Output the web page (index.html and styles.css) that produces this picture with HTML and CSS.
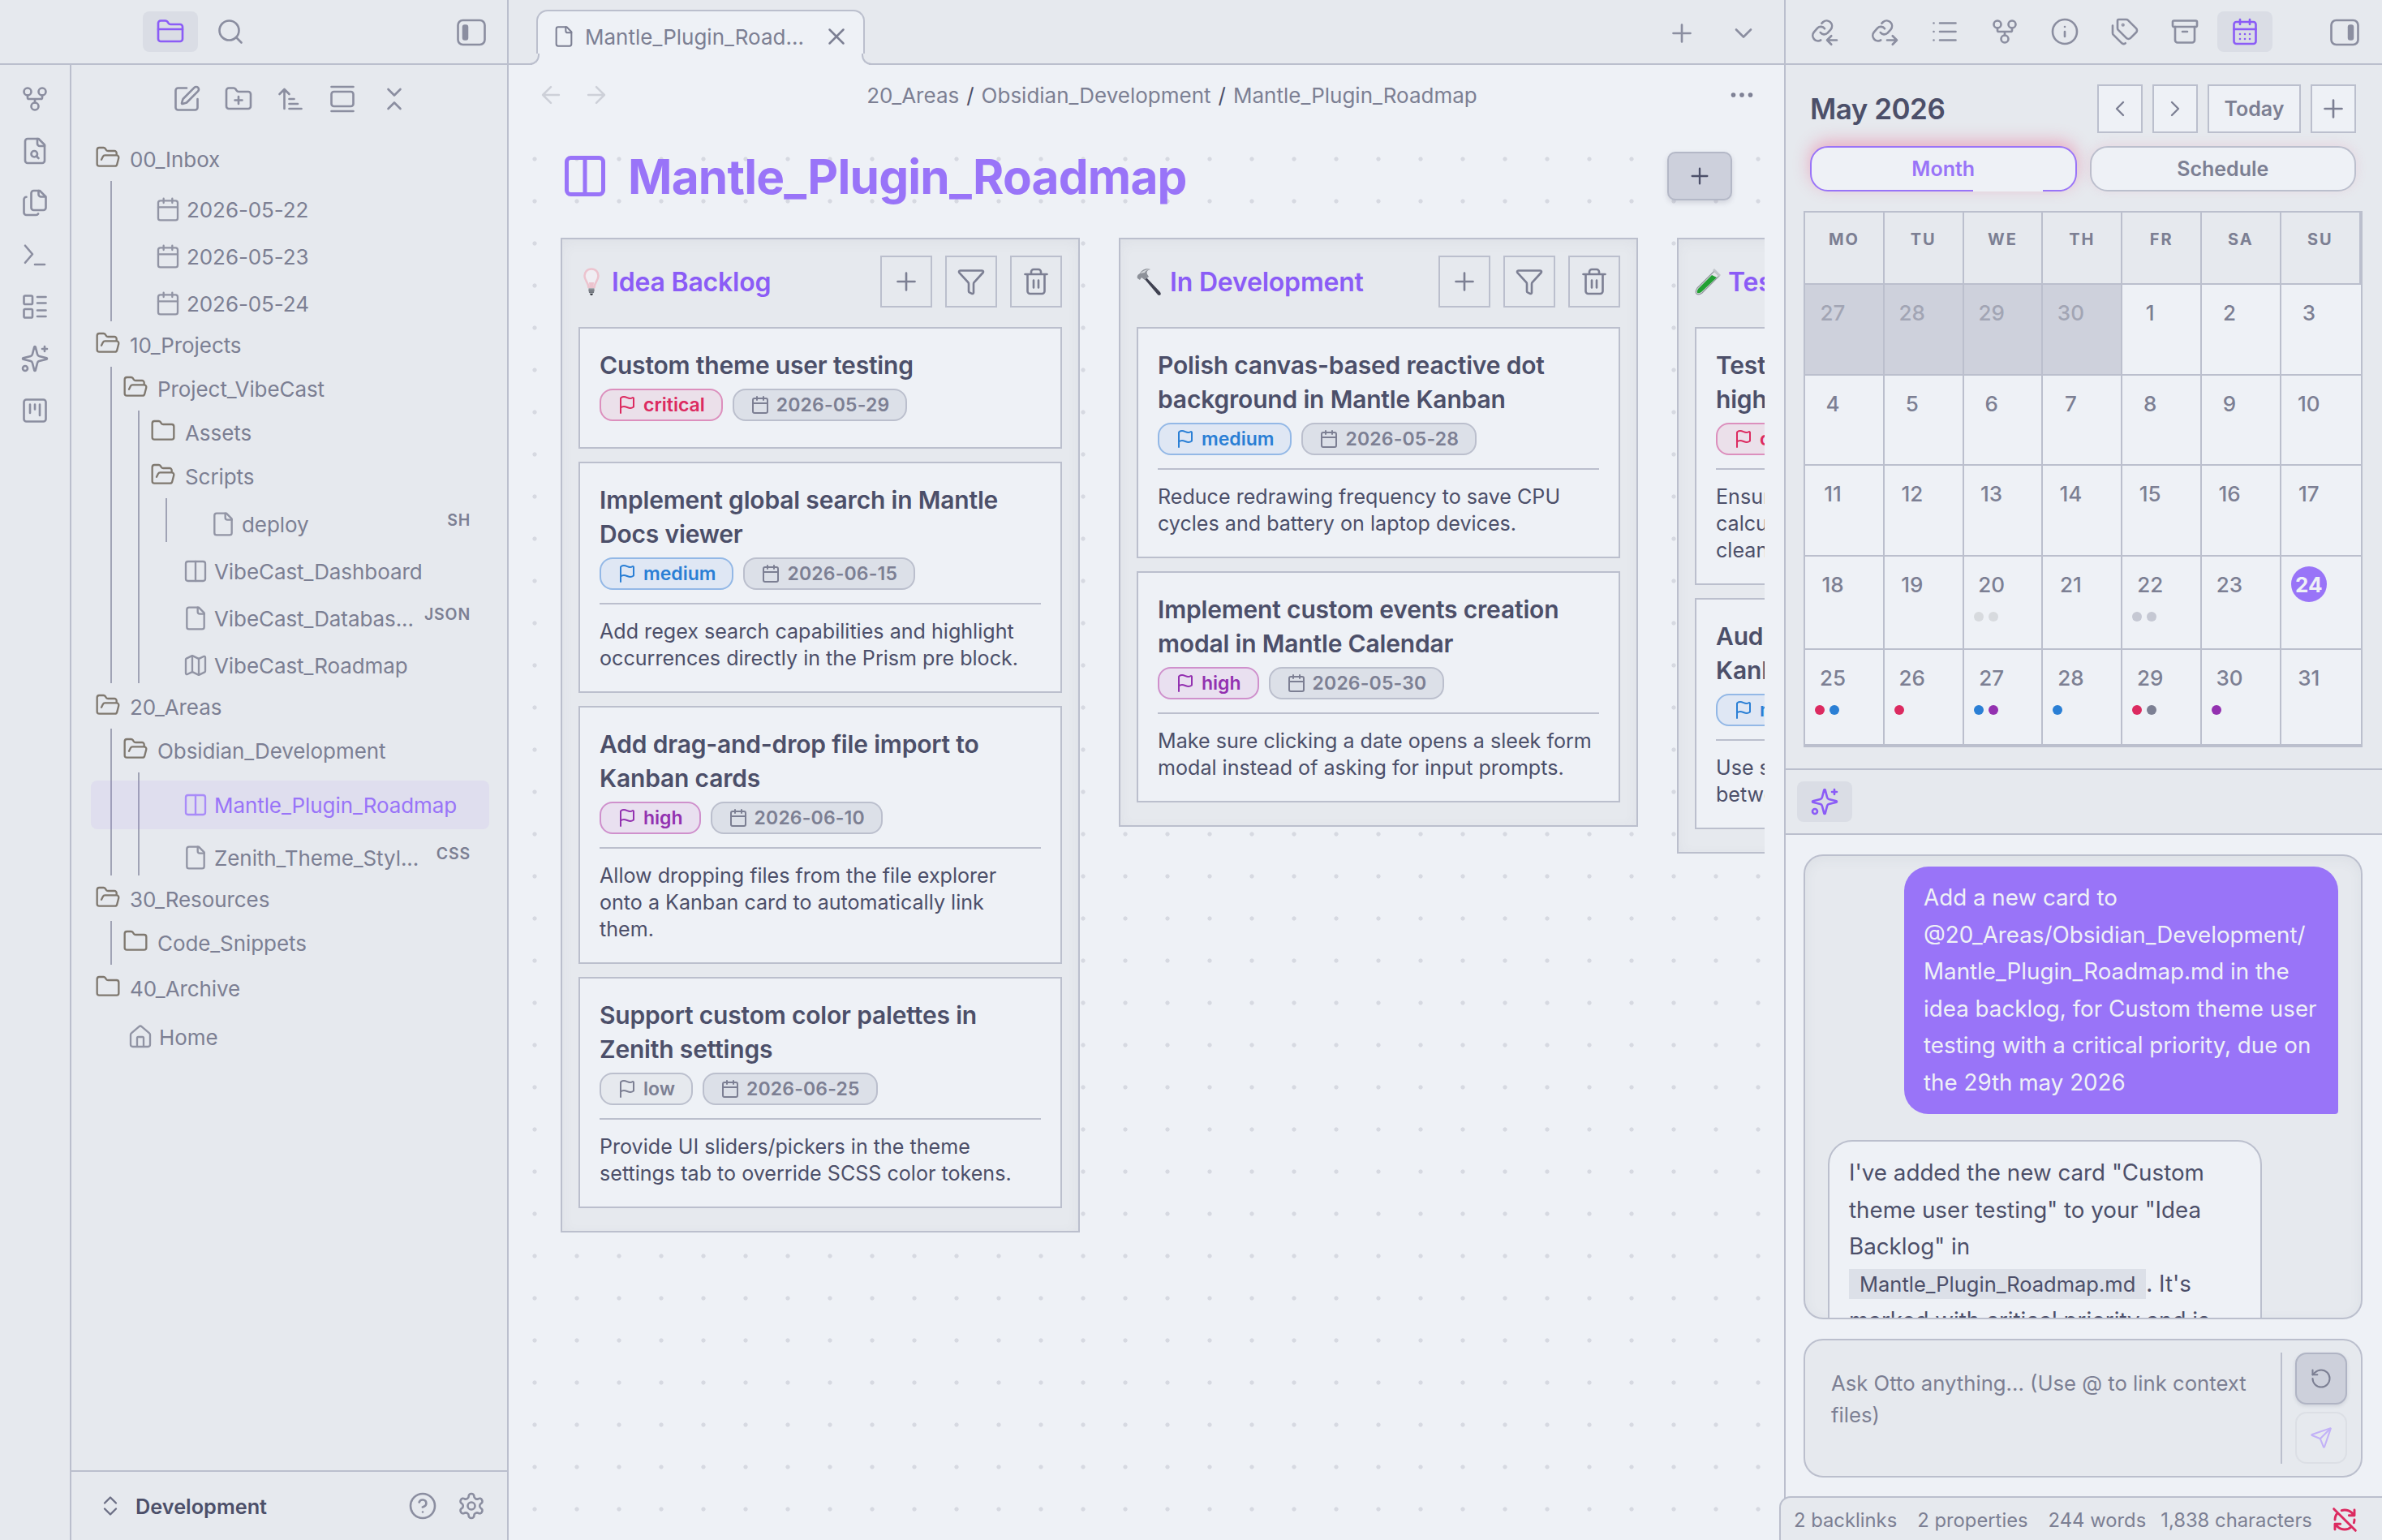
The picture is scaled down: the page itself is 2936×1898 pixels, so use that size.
FILE: index.html
```html
<!DOCTYPE html>
<html lang="en">
<head>
    <meta charset="UTF-8">
    <meta name="viewport" content="width=device-width, initial-scale=1.0">
    <title>Mantle_Plugin_Roadmap</title>
    <link rel="stylesheet" href="styles.css">
</head>
<body>
    <!-- icon sprite -->
    <svg class="sprite" aria-hidden="true">
        <symbol id="folder" viewBox="0 0 24 24"><path d="M20 20a2 2 0 0 0 2-2V8a2 2 0 0 0-2-2h-7.9a2 2 0 0 1-1.69-.9L9.6 3.9A2 2 0 0 0 7.93 3H4a2 2 0 0 0-2 2v13a2 2 0 0 0 2 2Z"/></symbol>
        <symbol id="folder-closed" viewBox="0 0 24 24"><path d="M20 20a2 2 0 0 0 2-2V8a2 2 0 0 0-2-2h-7.9a2 2 0 0 1-1.69-.9L9.6 3.9A2 2 0 0 0 7.93 3H4a2 2 0 0 0-2 2v13a2 2 0 0 0 2 2Z"/><path d="M2 10h20"/></symbol>
        <symbol id="folder-plus" viewBox="0 0 24 24"><path d="M20 20a2 2 0 0 0 2-2V8a2 2 0 0 0-2-2h-7.9a2 2 0 0 1-1.69-.9L9.6 3.9A2 2 0 0 0 7.93 3H4a2 2 0 0 0-2 2v13a2 2 0 0 0 2 2Z"/><path d="M12 10v6M9 13h6"/></symbol>
        <symbol id="folder-open" viewBox="0 0 24 24"><path d="m6 14 1.5-2.9A2 2 0 0 1 9.24 10H20a2 2 0 0 1 1.94 2.5l-1.54 6a2 2 0 0 1-1.95 1.5H4a2 2 0 0 1-2-2V5a2 2 0 0 1 2-2h3.9a2 2 0 0 1 1.69.9l.81 1.2a2 2 0 0 0 1.67.9H18a2 2 0 0 1 2 2v2"/></symbol>
        <symbol id="search" viewBox="0 0 24 24"><circle cx="11" cy="11" r="8"/><path d="m21 21-4.3-4.3"/></symbol>
        <symbol id="sidebar-left" viewBox="0 0 24 24"><rect x="1" y="2" width="22" height="20" rx="4"/><rect class="solid" x="4.5" y="5.5" width="5" height="13" rx="2"/></symbol>
        <symbol id="sidebar-right" viewBox="0 0 24 24"><rect x="1" y="2" width="22" height="20" rx="4"/><rect class="solid" x="14.5" y="5.5" width="5" height="13" rx="2"/></symbol>
        <symbol id="git-fork" viewBox="0 0 24 24"><circle cx="12" cy="18" r="3"/><circle cx="6" cy="6" r="3"/><circle cx="18" cy="6" r="3"/><path d="M18 9v2c0 .6-.4 1-1 1H7c-.6 0-1-.4-1-1V9M12 12v3"/></symbol>
        <symbol id="file" viewBox="0 0 24 24"><path d="M15 2H6a2 2 0 0 0-2 2v16a2 2 0 0 0 2 2h12a2 2 0 0 0 2-2V7Z"/><path d="M14 2v4a2 2 0 0 0 2 2h4"/></symbol>
        <symbol id="file-search" viewBox="0 0 24 24"><path d="M15 2H6a2 2 0 0 0-2 2v16a2 2 0 0 0 2 2h12a2 2 0 0 0 2-2V7Z"/><path d="M14 2v4a2 2 0 0 0 2 2h4"/><circle cx="11.5" cy="14.5" r="2.5"/><path d="M13.3 16.3 15 18"/></symbol>
        <symbol id="files" viewBox="0 0 24 24"><path d="M20 7h-3a2 2 0 0 1-2-2V2"/><path d="M11 18a2 2 0 0 1-2-2V4a2 2 0 0 1 2-2h5l5 5v9a2 2 0 0 1-2 2Z"/><path d="M5 7.2a2 2 0 0 0-2 2V20a2 2 0 0 0 2 2h8a2 2 0 0 0 1.7-1"/></symbol>
        <symbol id="terminal" viewBox="0 0 24 24"><path d="m4 18.5 6-7-6-7M12 20h8"/></symbol>
        <symbol id="layout-list" viewBox="0 0 24 24"><rect x="3" y="3" width="7" height="7" rx="1"/><rect x="3" y="14" width="7" height="7" rx="1"/><path d="M14 4h7M14 9h7M14 15h7M14 20h7"/></symbol>
        <symbol id="sparkles" viewBox="0 0 24 24"><path d="M9.937 15.5A2 2 0 0 0 8.5 14.063l-6.135-1.582a.5.5 0 0 1 0-.962L8.5 9.936A2 2 0 0 0 9.937 8.5l1.582-6.135a.5.5 0 0 1 .963 0L14.063 8.5A2 2 0 0 0 15.5 9.937l6.135 1.581a.5.5 0 0 1 0 .964L15.5 14.063a2 2 0 0 0-1.437 1.437l-1.582 6.135a.5.5 0 0 1-.963 0z"/><path d="M20 2v4M22 4h-4"/><circle cx="4" cy="20" r="2"/></symbol>
        <symbol id="kanban" viewBox="0 0 24 24"><rect x="3" y="3" width="18" height="18" rx="2"/><path d="M8 7v7M12 7v4M16 7v9"/></symbol>
        <symbol id="edit" viewBox="0 0 24 24"><path d="M12 3H5a2 2 0 0 0-2 2v14a2 2 0 0 0 2 2h14a2 2 0 0 0 2-2v-7"/><path d="M18.375 2.625a1 1 0 0 1 3 3l-9.013 9.014a2 2 0 0 1-.853.505l-2.873.84a.5.5 0 0 1-.62-.62l.84-2.873a2 2 0 0 1 .506-.852z"/></symbol>
        <symbol id="sort" viewBox="0 0 24 24"><path d="m3 8 4-4 4 4M7 4v16M11 12h4M11 16h7M11 20h10"/></symbol>
        <symbol id="gallery" viewBox="0 0 24 24"><path d="M3 2h18M3 22h18"/><rect x="3" y="6" width="18" height="12" rx="2"/></symbol>
        <symbol id="collapse" viewBox="0 0 24 24"><path d="m7 20 5-5 5 5M7 4l5 5 5-5"/></symbol>
        <symbol id="chevrons-up-down" viewBox="0 0 24 24"><path d="m6 15 6 6 6-6M6 9l6-6 6 6"/></symbol>
        <symbol id="calendar" viewBox="0 0 24 24"><path d="M8 2v4M16 2v4M3 10h18"/><rect x="3" y="4" width="18" height="18" rx="2"/></symbol>
        <symbol id="calendar-days" viewBox="0 0 24 24"><path d="M8 2v4M16 2v4M3 10h18M8 14h.01M12 14h.01M16 14h.01M8 18h.01M12 18h.01M16 18h.01"/><rect x="3" y="4" width="18" height="18" rx="2"/></symbol>
        <symbol id="columns" viewBox="0 0 24 24"><rect x="3" y="3" width="18" height="18" rx="2"/><path d="M12 3v18"/></symbol>
        <symbol id="map" viewBox="0 0 24 24"><path d="M14.106 5.553a2 2 0 0 0 1.788 0l3.659-1.83A1 1 0 0 1 21 4.619v12.764a1 1 0 0 1-.553.894l-4.553 2.277a2 2 0 0 1-1.788 0l-4.212-2.106a2 2 0 0 0-1.788 0l-3.659 1.83A1 1 0 0 1 3 19.381V6.618a1 1 0 0 1 .553-.894l4.553-2.277a2 2 0 0 1 1.788 0z"/><path d="M15 5.764v15M9 3.236v15"/></symbol>
        <symbol id="home" viewBox="0 0 24 24"><path d="M15 21v-8a1 1 0 0 0-1-1h-4a1 1 0 0 0-1 1v8"/><path d="M3 10a2 2 0 0 1 .709-1.528l7-6a2 2 0 0 1 2.582 0l7 6A2 2 0 0 1 21 10v9a2 2 0 0 1-2 2H5a2 2 0 0 1-2-2z"/></symbol>
        <symbol id="help" viewBox="0 0 24 24"><circle cx="12" cy="12" r="10"/><path d="M9.09 9a3 3 0 0 1 5.83 1c0 2-3 3-3 3M12 17h.01"/></symbol>
        <symbol id="settings" viewBox="0 0 24 24"><path d="M12.22 2h-.44a2 2 0 0 0-2 2v.18a2 2 0 0 1-1 1.73l-.43.25a2 2 0 0 1-2 0l-.15-.08a2 2 0 0 0-2.73.73l-.22.38a2 2 0 0 0 .73 2.73l.15.1a2 2 0 0 1 1 1.72v.51a2 2 0 0 1-1 1.74l-.15.09a2 2 0 0 0-.73 2.73l.22.38a2 2 0 0 0 2.73.73l.15-.08a2 2 0 0 1 2 0l.43.25a2 2 0 0 1 1 1.73V20a2 2 0 0 0 2 2h.44a2 2 0 0 0 2-2v-.18a2 2 0 0 1 1-1.73l.43-.25a2 2 0 0 1 2 0l.15.08a2 2 0 0 0 2.73-.73l.22-.39a2 2 0 0 0-.73-2.73l-.15-.08a2 2 0 0 1-1-1.74v-.5a2 2 0 0 1 1-1.74l.15-.09a2 2 0 0 0 .73-2.73l-.22-.38a2 2 0 0 0-2.73-.73l-.15.08a2 2 0 0 1-2 0l-.43-.25a2 2 0 0 1-1-1.73V4a2 2 0 0 0-2-2z"/><circle cx="12" cy="12" r="3"/></symbol>
        <symbol id="close" viewBox="0 0 24 24"><path d="M18 6 6 18M6 6l12 12"/></symbol>
        <symbol id="plus" viewBox="0 0 24 24"><path d="M5 12h14M12 5v14"/></symbol>
        <symbol id="chevron-down" viewBox="0 0 24 24"><path d="m6 9 6 6 6-6"/></symbol>
        <symbol id="chevron-left" viewBox="0 0 24 24"><path d="m15 18-6-6 6-6"/></symbol>
        <symbol id="chevron-right" viewBox="0 0 24 24"><path d="m9 18 6-6-6-6"/></symbol>
        <symbol id="arrow-left" viewBox="0 0 24 24"><path d="m12 19-7-7 7-7M19 12H5"/></symbol>
        <symbol id="arrow-right" viewBox="0 0 24 24"><path d="M5 12h14M12 5l7 7-7 7"/></symbol>
        <symbol id="more" viewBox="0 0 24 24"><circle cx="12" cy="12" r="1"/><circle cx="19" cy="12" r="1"/><circle cx="5" cy="12" r="1"/></symbol>
        <symbol id="filter" viewBox="0 0 24 24"><path d="M10 20a1 1 0 0 0 .553.895l2 1A1 1 0 0 0 14 21v-7a2 2 0 0 1 .517-1.341L21.74 4.67A1 1 0 0 0 21 3H3a1 1 0 0 0-.742 1.67l7.225 7.989A2 2 0 0 1 10 14z"/></symbol>
        <symbol id="trash" viewBox="0 0 24 24"><path d="M3 6h18M19 6v14c0 1-1 2-2 2H7c-1 0-2-1-2-2V6M8 6V4c0-1 1-2 2-2h4c1 0 2 1 2 2v2M10 11v6M14 11v6"/></symbol>
        <symbol id="flag" viewBox="0 0 24 24"><path d="M4 22V4a1 1 0 0 1 .4-.8A6 6 0 0 1 8 2c3 0 5 2 7.333 2q2 0 3.067-.8A1 1 0 0 1 20 4v10a1 1 0 0 1-.4.8A6 6 0 0 1 16 16c-3 0-5-2-8-2a6 6 0 0 0-4 1.528"/></symbol>
        <symbol id="link-in" viewBox="0 0 24 24"><path d="M8.5 12.7a3.9 3.9 0 0 0 5.9.4l2.6-2.9a4.4 4.4 0 0 0-6.2-6.2L9.6 5.2"/><path d="M12 9.5a3.9 3.9 0 0 0-5.9-.4l-2.9 3.3a4.4 4.4 0 0 0 5.6 6.6"/><path d="M22 19h-8M17.5 15.5 14 19l3.5 3.5"/></symbol>
        <symbol id="link-out" viewBox="0 0 24 24"><path d="M8.5 12.7a3.9 3.9 0 0 0 5.9.4l2.6-2.9a4.4 4.4 0 0 0-6.2-6.2L9.6 5.2"/><path d="M12 9.5a3.9 3.9 0 0 0-5.9-.4l-2.9 3.3a4.4 4.4 0 0 0 5.6 6.6"/><path d="M14 19h8M18.5 15.5 22 19l-3.5 3.5"/></symbol>
        <symbol id="list" viewBox="0 0 24 24"><path d="M8 5h13M8 12h13M8 19h13M3 5h.01M3 12h.01M3 19h.01"/></symbol>
        <symbol id="info" viewBox="0 0 24 24"><circle cx="12" cy="12" r="10"/><path d="M12 16v-4M12 8h.01"/></symbol>
        <symbol id="tags" viewBox="0 0 24 24"><path d="M13.172 2a2 2 0 0 1 1.414.586l6.71 6.71a2.4 2.4 0 0 1 0 3.408l-4.592 4.592a2.4 2.4 0 0 1-3.408 0l-6.71-6.71A2 2 0 0 1 6 9.172V3a1 1 0 0 1 1-1z"/><path d="M2 7v6.172a2 2 0 0 0 .586 1.414l6.71 6.71a2.4 2.4 0 0 0 3.191.193"/><circle cx="10.5" cy="6.5" r=".5"/></symbol>
        <symbol id="archive" viewBox="0 0 24 24"><rect x="2" y="3" width="20" height="5" rx="1"/><path d="M4 8v11a2 2 0 0 0 2 2h12a2 2 0 0 0 2-2V8M10 12h4"/></symbol>
        <symbol id="reset" viewBox="0 0 24 24"><path d="M3 12a9 9 0 1 0 9-9 9.75 9.75 0 0 0-6.74 2.74L3 8"/><path d="M3 3v5h5"/></symbol>
        <symbol id="send" viewBox="0 0 24 24"><path d="M14.536 21.686a.5.5 0 0 0 .937-.024l6.5-19a.496.496 0 0 0-.635-.635l-19 6.5a.5.5 0 0 0-.024.937l7.93 3.18a2 2 0 0 1 1.112 1.11z"/><path d="m21.854 2.147-10.94 10.939"/></symbol>
        <symbol id="sync-off" viewBox="0 0 24 24"><path d="M21 8l-2.26-2.26A9.75 9.75 0 0 0 12 3c-1 0-1.97.16-2.87.47M8 16H3v5M3 12c0-2.49 1-4.74 2.64-6.36M3 16l2.26 2.26A9.75 9.75 0 0 0 12 21c2.49 0 4.74-1 6.36-2.64M21 12c0 1-.16 1.97-.47 2.87M21 3v5h-5M22 22 2 2"/></symbol>
    </svg>

    <div class="app">
        <!-- left sidebar -->
        <aside class="left">
            <div class="topbar left-topbar">
                <div class="tab-icons">
                    <span class="icon-tab active"><svg class="icon"><use href="#folder-closed"/></svg></span>
                    <span class="icon-tab"><svg class="icon"><use href="#search"/></svg></span>
                </div>
                <svg class="icon toggle"><use href="#sidebar-left"/></svg>
            </div>
            <div class="left-body">
                <nav class="ribbon">
                    <svg class="icon"><use href="#git-fork"/></svg>
                    <svg class="icon"><use href="#file-search"/></svg>
                    <svg class="icon"><use href="#files"/></svg>
                    <svg class="icon"><use href="#terminal"/></svg>
                    <svg class="icon"><use href="#layout-list"/></svg>
                    <svg class="icon"><use href="#sparkles"/></svg>
                    <svg class="icon"><use href="#kanban"/></svg>
                </nav>
                <div class="explorer">
                    <div class="explorer-tools">
                        <svg class="icon"><use href="#edit"/></svg>
                        <svg class="icon"><use href="#folder-plus"/></svg>
                        <svg class="icon"><use href="#sort"/></svg>
                        <svg class="icon"><use href="#gallery"/></svg>
                        <svg class="icon"><use href="#collapse"/></svg>
                    </div>
                    <div class="tree">
                        <div class="folder"><svg class="icon"><use href="#folder-open"/></svg>00_Inbox</div>
                        <div class="children">
                            <div class="file first"><svg class="icon"><use href="#calendar"/></svg>2026-05-22</div>
                            <div class="file"><svg class="icon"><use href="#calendar"/></svg>2026-05-23</div>
                            <div class="file last"><svg class="icon"><use href="#calendar"/></svg>2026-05-24</div>
                        </div>
                        <div class="folder"><svg class="icon"><use href="#folder-open"/></svg>10_Projects</div>
                        <div class="children">
                            <div class="folder"><svg class="icon"><use href="#folder-open"/></svg>Project_VibeCast</div>
                            <div class="children">
                                <div class="folder"><svg class="icon"><use href="#folder"/></svg>Assets</div>
                                <div class="folder"><svg class="icon"><use href="#folder-open"/></svg>Scripts</div>
                                <div class="children">
                                    <div class="file first last"><svg class="icon"><use href="#file"/></svg>deploy<span class="ext">SH</span></div>
                                </div>
                                <div class="file after-group"><svg class="icon"><use href="#columns"/></svg>VibeCast_Dashboard</div>
                                <div class="file"><svg class="icon"><use href="#file"/></svg>VibeCast_Databas...<span class="ext">JSON</span></div>
                                <div class="file last"><svg class="icon"><use href="#map"/></svg>VibeCast_Roadmap</div>
                            </div>
                        </div>
                        <div class="folder"><svg class="icon"><use href="#folder-open"/></svg>20_Areas</div>
                        <div class="children">
                            <div class="folder"><svg class="icon"><use href="#folder-open"/></svg>Obsidian_Development</div>
                            <div class="children">
                                <div class="file selected"><svg class="icon"><use href="#columns"/></svg>Mantle_Plugin_Roadmap</div>
                                <div class="file last"><svg class="icon"><use href="#file"/></svg>Zenith_Theme_Styl...<span class="ext">CSS</span></div>
                            </div>
                        </div>
                        <div class="folder"><svg class="icon"><use href="#folder-open"/></svg>30_Resources</div>
                        <div class="children">
                            <div class="folder"><svg class="icon"><use href="#folder"/></svg>Code_Snippets</div>
                        </div>
                        <div class="folder"><svg class="icon"><use href="#folder"/></svg>40_Archive</div>
                        <div class="file root"><svg class="icon"><use href="#home"/></svg>Home</div>
                    </div>
                    <footer class="vault">
                        <svg class="icon switcher"><use href="#chevrons-up-down"/></svg>
                        <span class="vault-name">Development</span>
                        <svg class="icon"><use href="#help"/></svg>
                        <svg class="icon"><use href="#settings"/></svg>
                    </footer>
                </div>
            </div>
        </aside>

        <!-- kanban view -->
        <main class="center">
            <div class="topbar tabs">
                <div class="tab">
                    <svg class="icon"><use href="#file"/></svg>
                    <span>Mantle_Plugin_Road...</span>
                    <svg class="icon close"><use href="#close"/></svg>
                </div>
                <div class="tab-actions">
                    <svg class="icon"><use href="#plus"/></svg>
                    <svg class="icon"><use href="#chevron-down"/></svg>
                </div>
            </div>
            <div class="view-header">
                <div class="history">
                    <svg class="icon"><use href="#arrow-left"/></svg>
                    <svg class="icon"><use href="#arrow-right"/></svg>
                </div>
                <div class="crumbs"><span>20_Areas</span><i>/</i><span>Obsidian_Development</span><i>/</i><span>Mantle_Plugin_Roadmap</span></div>
                <svg class="icon more"><use href="#more"/></svg>
            </div>
            <div class="canvas">
                <div class="board-header">
                    <svg class="icon"><use href="#columns"/></svg>
                    <h1>Mantle_Plugin_Roadmap</h1>
                    <button class="add-column"><svg class="icon"><use href="#plus"/></svg></button>
                </div>
                <div class="board">
                    <section class="column">
                        <div class="column-header">
                            <svg class="emoji" viewBox="0 0 32 36">
                                <path d="M16 2.5C10.500 2.500 7.500 6.500 7.500 11c0 5.500 4.500 8 5 14h7c.5-6 5-8.500 5-14 0-4.500-3-8.500-8.500-8.500z" fill="#f0eef3" stroke="#ecc3ce" stroke-width="2.600"/>
                                <path d="M13 19h6l-.5 6h-5z" fill="#ecc3ce"/>
                                <path d="M12.500 26h7v5l-2 2h-3l-2-2z" fill="#a9adb3"/>
                                <path d="M12.500 28.500h7M13 31h6" stroke="#5f636c" stroke-width="1.500"/>
                                <path d="M14 33h4l-1 2h-2z" fill="#3c3f48"/>
                            </svg>
                            <h2>Idea Backlog</h2>
                            <button><svg class="icon"><use href="#plus"/></svg></button>
                            <button><svg class="icon"><use href="#filter"/></svg></button>
                            <button><svg class="icon"><use href="#trash"/></svg></button>
                        </div>
                        <article class="card">
                            <h3>Custom theme user testing</h3>
                            <div class="tags bare">
                                <span class="tag critical"><svg class="icon"><use href="#flag"/></svg>critical</span>
                                <span class="tag date"><svg class="icon"><use href="#calendar"/></svg>2026-05-29</span>
                            </div>
                        </article>
                        <article class="card">
                            <h3>Implement global search in Mantle<br>Docs viewer</h3>
                            <div class="tags">
                                <span class="tag medium"><svg class="icon"><use href="#flag"/></svg>medium</span>
                                <span class="tag date"><svg class="icon"><use href="#calendar"/></svg>2026-06-15</span>
                            </div>
                            <p>Add regex search capabilities and highlight<br>occurrences directly in the Prism pre block.</p>
                        </article>
                        <article class="card">
                            <h3>Add drag-and-drop file import to<br>Kanban cards</h3>
                            <div class="tags">
                                <span class="tag high"><svg class="icon"><use href="#flag"/></svg>high</span>
                                <span class="tag date"><svg class="icon"><use href="#calendar"/></svg>2026-06-10</span>
                            </div>
                            <p>Allow dropping files from the file explorer<br>onto a Kanban card to automatically link<br>them.</p>
                        </article>
                        <article class="card">
                            <h3>Support custom color palettes in<br>Zenith settings</h3>
                            <div class="tags">
                                <span class="tag low"><svg class="icon"><use href="#flag"/></svg>low</span>
                                <span class="tag date"><svg class="icon"><use href="#calendar"/></svg>2026-06-25</span>
                            </div>
                            <p>Provide UI sliders/pickers in the theme<br>settings tab to override SCSS color tokens.</p>
                        </article>
                    </section>

                    <section class="column">
                        <div class="column-header">
                            <svg class="emoji" viewBox="0 0 32 36">
                                <path d="M11 12 29 31q2 3-1 4-2 0-3-2L9 14z" fill="#3f4150"/>
                                <path d="M1 14c-1-3 1-5 3-6 2-4 7-7 13-5-4 1-5 3-4 6l2 3-5 4-4-3-2 3z" fill="#8d9199"/>
                                <path d="M4 8c3-3 7-5 12-5-4 1-5 2-6 4z" fill="#d5d8dc"/>
                            </svg>
                            <h2>In Development</h2>
                            <button><svg class="icon"><use href="#plus"/></svg></button>
                            <button><svg class="icon"><use href="#filter"/></svg></button>
                            <button><svg class="icon"><use href="#trash"/></svg></button>
                        </div>
                        <article class="card">
                            <h3>Polish canvas-based reactive dot<br>background in Mantle Kanban</h3>
                            <div class="tags">
                                <span class="tag medium"><svg class="icon"><use href="#flag"/></svg>medium</span>
                                <span class="tag date"><svg class="icon"><use href="#calendar"/></svg>2026-05-28</span>
                            </div>
                            <p>Reduce redrawing frequency to save CPU<br>cycles and battery on laptop devices.</p>
                        </article>
                        <article class="card">
                            <h3>Implement custom events creation<br>modal in Mantle Calendar</h3>
                            <div class="tags">
                                <span class="tag high"><svg class="icon"><use href="#flag"/></svg>high</span>
                                <span class="tag date"><svg class="icon"><use href="#calendar"/></svg>2026-05-30</span>
                            </div>
                            <p>Make sure clicking a date opens a sleek form<br>modal instead of asking for input prompts.</p>
                        </article>
                    </section>

                    <section class="column">
                        <div class="column-header">
                            <svg class="emoji" viewBox="0 0 32 36">
                                <path d="M24 5 30 11 9 32q-4 3-7 1-2-3 1-7z" fill="#e3e5e8" stroke="#8f949b" stroke-width="1.2"/>
                                <path d="M21 10 27 13 8 31q-3 2-5 1-1-2 1-5z" fill="#22a033"/>
                                <path d="m23 3 8 8" stroke="#c3c7cc" stroke-width="3"/>
                            </svg>
                            <h2>Testing</h2>
                        </div>
                        <article class="card">
                            <h3>Test on<br>high-DPI</h3>
                            <div class="tags">
                                <span class="tag critical"><svg class="icon"><use href="#flag"/></svg>critical</span>
                            </div>
                            <p>Ensure<br>calculations<br>clean up.</p>
                        </article>
                        <article class="card">
                            <h3>Audit<br>Kanban</h3>
                            <div class="tags">
                                <span class="tag medium"><svg class="icon"><use href="#flag"/></svg>medium</span>
                            </div>
                            <p>Use sync<br>between.</p>
                        </article>
                    </section>
                </div>
            </div>
        </main>

        <!-- right sidebar -->
        <aside class="right">
            <div class="topbar right-topbar">
                <div class="tab-icons">
                    <span class="icon-tab"><svg class="icon"><use href="#link-in"/></svg></span>
                    <span class="icon-tab"><svg class="icon"><use href="#link-out"/></svg></span>
                    <span class="icon-tab"><svg class="icon"><use href="#list"/></svg></span>
                    <span class="icon-tab"><svg class="icon"><use href="#git-fork"/></svg></span>
                    <span class="icon-tab"><svg class="icon"><use href="#info"/></svg></span>
                    <span class="icon-tab"><svg class="icon"><use href="#tags"/></svg></span>
                    <span class="icon-tab"><svg class="icon"><use href="#archive"/></svg></span>
                    <span class="icon-tab active"><svg class="icon"><use href="#calendar-days"/></svg></span>
                </div>
                <svg class="icon toggle"><use href="#sidebar-right"/></svg>
            </div>

            <section class="calendar">
                <div class="calendar-header">
                    <h2>May 2026</h2>
                    <button><svg class="icon"><use href="#chevron-left"/></svg></button>
                    <button><svg class="icon"><use href="#chevron-right"/></svg></button>
                    <button class="today">Today</button>
                    <button><svg class="icon large"><use href="#plus"/></svg></button>
                </div>
                <div class="view-switch">
                    <button class="active">Month</button>
                    <button>Schedule</button>
                </div>
                <div class="month">
                    <b>MO</b><b>TU</b><b>WE</b><b>TH</b><b>FR</b><b>SA</b><b>SU</b>
                    <div class="day other"><span>27</span></div>
                    <div class="day other"><span>28</span></div>
                    <div class="day other"><span>29</span></div>
                    <div class="day other"><span>30</span></div>
                    <div class="day"><span>1</span></div>
                    <div class="day"><span>2</span></div>
                    <div class="day"><span>3</span></div>
                    <div class="day"><span>4</span></div>
                    <div class="day"><span>5</span></div>
                    <div class="day"><span>6</span></div>
                    <div class="day"><span>7</span></div>
                    <div class="day"><span>8</span></div>
                    <div class="day"><span>9</span></div>
                    <div class="day"><span>10</span></div>
                    <div class="day"><span>11</span></div>
                    <div class="day"><span>12</span></div>
                    <div class="day"><span>13</span></div>
                    <div class="day"><span>14</span></div>
                    <div class="day"><span>15</span></div>
                    <div class="day"><span>16</span></div>
                    <div class="day"><span>17</span></div>
                    <div class="day"><span>18</span></div>
                    <div class="day"><span>19</span></div>
                    <div class="day"><span>20</span><div class="dots"><i class="faint"></i><i class="faint"></i></div></div>
                    <div class="day"><span>21</span></div>
                    <div class="day"><span>22</span><div class="dots"><i class="dim"></i><i class="dim"></i></div></div>
                    <div class="day"><span>23</span></div>
                    <div class="day now"><span>24</span></div>
                    <div class="day"><span>25</span><div class="dots"><i class="red"></i><i class="blue"></i></div></div>
                    <div class="day"><span>26</span><div class="dots"><i class="red"></i></div></div>
                    <div class="day"><span>27</span><div class="dots"><i class="blue"></i><i class="purple"></i></div></div>
                    <div class="day"><span>28</span><div class="dots"><i class="blue"></i></div></div>
                    <div class="day"><span>29</span><div class="dots"><i class="red"></i><i class="grey"></i></div></div>
                    <div class="day"><span>30</span><div class="dots"><i class="purple"></i></div></div>
                    <div class="day"><span>31</span></div>
                </div>
            </section>

            <div class="otto-tabs">
                <span class="icon-tab active"><svg class="icon"><use href="#sparkles"/></svg></span>
            </div>
            <section class="otto">
                <div class="messages">
                    <div class="message user">Add a new card to<br>@20_Areas/Obsidian_Development/<br>Mantle_Plugin_Roadmap.md in the<br>idea backlog, for Custom theme user<br>testing with a critical priority, due on<br>the 29th may 2026</div>
                    <div class="message bot">I've added the new card "Custom<br>theme user testing" to your "Idea<br>Backlog" in<br><code>Mantle_Plugin_Roadmap.md</code>. It's<br>marked with critical priority and is</div>
                </div>
                <div class="prompt">
                    <div class="placeholder">Ask Otto anything... (Use @ to link context<br>files)</div>
                    <div class="prompt-actions">
                        <button class="reset"><svg class="icon"><use href="#reset"/></svg></button>
                        <button class="send"><svg class="icon"><use href="#send"/></svg></button>
                    </div>
                </div>
            </section>
        </aside>

        <div class="status-bar">
            <span>2 backlinks</span>
            <span>2 properties</span>
            <span>244 words</span>
            <span class="chars">1,838 characters</span>
            <svg class="icon"><use href="#sync-off"/></svg>
        </div>
    </div>
</body>
</html>
```

FILE: styles.css
```css
:root {
    --base: #eef1f6;
    --mantle: #e6e9ee;
    --crust: #dce0e8;
    --border: #bbbfcd;
    --text: #4c4f69;
    --muted: #7c7f93;
    --icon: #8b8ea0;
    --accent: #9974f8;
    --accent-dark: #8b5cf6;
    --red: #dc2a60;
    --blue: #2a7fd5;
    --purple: #9331b0;
}

* {
    box-sizing: border-box;
}

body {
    margin: 0;
    font-family: Inter, "Liberation Sans", sans-serif;
    font-size: 26px;
    color: var(--muted);
    background-color: var(--base);
}

h1, h2, h3, p {
    margin: 0;
}

button {
    display: flex;
    align-items: center;
    justify-content: center;
    padding: 0;
    font: inherit;
    color: inherit;
    background: none;
    border: 2px solid var(--border);
}

.sprite {
    display: none;
}

.icon {
    width: 36px;
    height: 36px;
    flex: none;
    fill: none;
    stroke: currentColor;
    stroke-width: 1.75;
    stroke-linecap: round;
    stroke-linejoin: round;
}

.solid {
    fill: currentColor;
    stroke: none;
}

.app {
    position: relative;
    display: flex;
    width: 2936px;
    height: 1898px;
    overflow: hidden;
}

.topbar {
    display: flex;
    flex: none;
    height: 80px;
    background-color: var(--mantle);
    border-bottom: 2px solid var(--border);
    color: var(--icon);
}

.tab-icons {
    display: flex;
    gap: 6px;
    padding-top: 14px;
}

.icon-tab {
    display: flex;
    align-items: center;
    justify-content: center;
    width: 68px;
    height: 50px;
    border-radius: 8px;
}

.icon-tab.active {
    background-color: #dadde5;
    color: var(--accent-dark);
}

.toggle {
    margin-top: 22px;
}

/* left sidebar */

.left {
    display: flex;
    flex-direction: column;
    width: 627px;
    background-color: var(--mantle);
    border-right: 2px solid var(--border);
}

.left-topbar {
    justify-content: space-between;
    padding: 0 26px 0 176px;
}

.left-body {
    display: flex;
    flex: 1;
}

.ribbon {
    display: flex;
    flex-direction: column;
    align-items: center;
    gap: 28px;
    width: 88px;
    padding-top: 24px;
    border-right: 2px solid var(--border);
    color: var(--icon);
}

.explorer {
    display: flex;
    flex-direction: column;
    flex: 1;
}

.explorer-tools {
    display: flex;
    justify-content: center;
    gap: 28px;
    padding: 24px 0 29px 3px;
    color: var(--icon);
}

.tree {
    flex: 1;
    padding: 0 22px 0 24px;
    letter-spacing: -0.08px;
}

.tree .icon {
    width: 32px;
    height: 32px;
}

.folder,
.file {
    display: flex;
    align-items: center;
}

.folder {
    gap: 11px;
    height: 54px;
    padding-left: 5px;
}

.folder .icon {
    margin-top: -5px;
    color: #7f786f;
}

.file {
    gap: 7px;
    height: 58px;
    padding: 0 23px 0 53px;
}

.file .icon {
    color: #9194a4;
}

.children {
    display: flow-root;
    margin: 0 0 2px 24px;
    border-left: 2px solid #a0a3b5;
}

.children .children {
    margin: 0 0 0 32px;
}

.children .folder {
    padding-left: 13px;
}

.file.first {
    margin-top: 6px;
}

.children .children .file.first {
    margin-top: 3px;
}

.file.last {
    margin-bottom: -7px;
}

.file.after-group {
    margin-top: 7px;
}

.file.root {
    margin-top: 4px;
    padding-left: 45px;
}

.file.selected {
    height: 60px;
    margin: 10px 0 6px -60px;
    padding-left: 113px;
    border-radius: 8px;
    background-color: rgba(153, 116, 248, 0.09);
    color: var(--accent);
}

.file.selected .icon {
    color: #a98bf8;
}

.ext {
    margin: -10px 0 0 auto;
    font-size: 19.5px;
    font-weight: 600;
    letter-spacing: 0.8px;
}

.vault {
    display: flex;
    align-items: center;
    height: 86px;
    padding: 0 26px 0 34px;
    border-top: 2px solid var(--border);
    color: var(--icon);
}

.vault .switcher {
    width: 28px;
    height: 28px;
    color: #6c6f85;
    stroke-width: 2;
}

.vault-name {
    flex: 1;
    margin-left: 17px;
    font-size: 25.3px;
    font-weight: 600;
    color: var(--text);
}

.vault .icon:last-child {
    margin-left: 24px;
}

/* center pane */

.center {
    display: flex;
    flex-direction: column;
    width: 1572px;
}

.tabs {
    justify-content: space-between;
    padding: 12px 32px 0 34px;
}

.tab {
    position: relative;
    display: flex;
    align-items: center;
    width: 405px;
    height: 68px;
    padding: 0 16px 4px 18px;
    background-color: var(--base);
    border: 2px solid var(--border);
    border-bottom: 0;
    border-radius: 14px 14px 0 0;
    color: var(--muted);
}

.tab::before,
.tab::after {
    content: "";
    position: absolute;
    bottom: 0;
    width: 12px;
    height: 12px;
    border: 0 solid var(--border);
    background-color: var(--mantle);
}

.tab::before {
    left: -12px;
    border-width: 0 2px 2px 0;
    border-bottom-right-radius: 12px;
    box-shadow: 5px 5px 0 var(--base);
    clip-path: inset(0);
}

.tab::after {
    right: -12px;
    border-width: 0 0 2px 2px;
    border-bottom-left-radius: 12px;
    box-shadow: -5px 5px 0 var(--base);
    clip-path: inset(0);
}

.tab .icon {
    width: 28px;
    height: 28px;
    margin-right: 12px;
}

.tab .close {
    width: 34px;
    height: 34px;
    margin: 0 0 0 auto;
}

.tab-actions {
    display: flex;
    gap: 40px;
    padding-top: 11px;
}

.view-header {
    display: flex;
    align-items: center;
    justify-content: space-between;
    height: 74px;
    padding: 0 34px 0 35px;
}

.history {
    display: flex;
    gap: 22px;
    color: #cdd0d8;
}

.history .icon {
    width: 34px;
    height: 34px;
}

.crumbs {
    display: flex;
    gap: 9px;
    margin-left: 8px;
}

.crumbs i {
    font-style: normal;
    color: var(--text);
}

.canvas {
    flex: 1;
    padding: 33px 24px 0 64px;
    background-image: radial-gradient(circle, #d6d9e1 2.2px, transparent 3px);
    background-size: 52px 52px;
    background-position: 6px 16px;
}

.board-header {
    display: flex;
    align-items: center;
    height: 60px;
    margin: 0 40px 46px 0;
    color: var(--accent);
}

.board-header > .icon {
    width: 60px;
    height: 60px;
    stroke-width: 2;
}

.board-header h1 {
    flex: 1;
    margin-left: 23px;
    font-size: 58.5px;
    font-weight: 700;
    letter-spacing: -0.8px;
}

.add-column {
    width: 80px;
    height: 60px;
    border-color: #b4b8c7;
    border-radius: 10px;
    background-color: #cdd0dc;
    box-shadow: 0 3px 6px rgba(76, 79, 105, 0.18);
    color: var(--text);
}

.add-column .icon {
    width: 32px;
    height: 32px;
}

.board {
    display: flex;
    align-items: flex-start;
    gap: 48px;
    overflow: hidden;
}

.column {
    display: flex;
    flex-direction: column;
    flex: none;
    gap: 16px;
    width: 640px;
    padding: 20px 20px 28px;
    background-color: var(--mantle);
    border: 2px solid var(--border);
    box-shadow: inset 0 4px 16px rgba(76, 79, 105, 0.05);
}

.column-header {
    display: flex;
    align-items: center;
    gap: 16px;
    height: 64px;
    margin-bottom: 8px;
}

.column-header h2 {
    flex: 1;
    margin-left: -7px;
    font-size: 32px;
    font-weight: 600;
    letter-spacing: -0.2px;
    color: var(--accent-dark);
}

.column-header button {
    width: 64px;
    height: 64px;
}

.emoji {
    width: 32px;
    height: 36px;
}

.card {
    padding: 24px;
    background-color: var(--base);
    border: 2px solid var(--border);
    color: var(--text);
}

.card h3 {
    font-size: 30px;
    font-weight: 600;
    line-height: 42px;
    letter-spacing: -0.18px;
}

.card p {
    padding-top: 17px;
    border-top: 2px solid var(--border);
    font-size: 25.1px;
    line-height: 33px;
}

.tags {
    display: flex;
    gap: 12px;
    margin: 8px 0 16px;
}

.tags.bare {
    margin-bottom: 8px;
}

.tag {
    display: flex;
    align-items: center;
    gap: 8px;
    height: 40px;
    padding: 0 20px;
    border: 2px solid var(--border);
    border-radius: 16px;
    font-size: 23px;
    font-weight: 600;
}

.tag .icon {
    width: 24px;
    height: 24px;
    stroke-width: 2;
}

.tag.critical {
    color: var(--red);
    background-color: #ebe0ea;
    border-color: #dc8fbd;
}

.tag.medium {
    color: var(--blue);
    background-color: #dfe7f4;
    border-color: #93b8e6;
}

.tag.high {
    color: var(--purple);
    background-color: #e9e0f0;
    border-color: #cf90cc;
}

.tag.low {
    color: var(--muted);
    background-color: var(--mantle);
}

.tag.date {
    color: var(--muted);
    background-color: var(--crust);
    letter-spacing: 0.15px;
}

/* right sidebar */

.right {
    display: flex;
    flex-direction: column;
    width: 737px;
    background-color: var(--mantle);
    border-left: 2px solid var(--border);
}

.right-topbar {
    justify-content: space-between;
    padding: 0 28px 0 14px;
}

.calendar {
    height: 867px;
    padding: 24px 24px 0 22px;
}

.calendar-header {
    display: flex;
    gap: 12px;
    padding: 0 8px;
}

.calendar-header h2 {
    flex: 1;
    font-size: 35px;
    font-weight: 600;
    line-height: 60px;
    letter-spacing: -0.5px;
    color: var(--text);
}

.calendar-header button {
    width: 56px;
    height: 60px;
    background-color: var(--base);
}

.calendar-header .today {
    width: 115px;
    font-size: 25px;
    font-weight: 600;
}

.calendar-header .icon {
    width: 32px;
    height: 32px;
}

.calendar-header .icon.large {
    width: 36px;
    height: 36px;
}

.view-switch {
    display: flex;
    gap: 16px;
    padding: 16px 8px 24px;
}

.view-switch button {
    flex: 1;
    height: 56px;
    border-radius: 22px;
    background-color: var(--base);
    box-shadow: 0 -2px 14px rgba(236, 120, 155, 0.16);
    font-size: 25px;
    font-weight: 600;
}

.view-switch .active {
    position: relative;
    border-color: var(--accent);
    color: var(--accent);
    box-shadow: 0 -6px 20px rgba(236, 100, 140, 0.45);
}

/* gap in the outline of the active button */
.view-switch .active::after {
    content: "";
    position: absolute;
    right: 40px;
    bottom: -2px;
    width: 86px;
    height: 2px;
    background-color: var(--base);
}

.month {
    display: grid;
    grid-template-columns: repeat(6, 97.8px) 1fr;
    grid-template-rows: 89px 112px 111px 112px 115px 116px;
    border: 2px solid var(--border);
    border-right: 0;
    border-bottom-width: 4px;
}

.month b {
    padding-top: 21px;
    border-right: 2px solid var(--border);
    border-bottom: 2px solid var(--border);
    font-size: 20px;
    font-weight: 700;
    letter-spacing: 2px;
    text-align: center;
}

.month b:nth-child(7) {
    border-right-width: 4px;
}

.day {
    padding: 12px;
    border-right: 2px solid var(--border);
    border-bottom: 2px solid var(--border);
    background-color: var(--base);
}

.day:nth-last-child(-n+7) {
    border-bottom: 0;
}

.day span {
    display: block;
    width: 44px;
    height: 44px;
    border-radius: 50%;
    font-weight: 500;
    line-height: 45px;
    text-align: center;
}

.day.other {
    background-color: #ced1dc;
    color: #a2a5b4;
}

.day.now span {
    background-color: var(--accent);
    color: var(--base);
    font-weight: 700;
}

.dots {
    display: flex;
    gap: 6px;
    margin-top: 12px;
}

.dots i {
    width: 12px;
    height: 12px;
    border-radius: 50%;
}

.dots .red { background-color: var(--red); }
.dots .blue { background-color: var(--blue); }
.dots .purple { background-color: var(--purple); }
.dots .grey { background-color: var(--muted); }
.dots .faint { background-color: #d7dade; }
.dots .dim { background-color: #c5c8d3; }

.otto-tabs {
    height: 82px;
    padding: 14px;
    border-top: 2px solid var(--border);
    border-bottom: 2px solid var(--border);
}

.otto {
    flex: 1;
    padding: 24px 24px 0 22px;
    background-color: var(--base);
}

.messages {
    display: flex;
    flex-direction: column;
    gap: 32px;
    height: 573px;
    padding: 13px 28px;
    border: 2px solid var(--border);
    border-radius: 24px;
    background-color: var(--mantle);
    box-shadow: inset 0 4px 16px rgba(76, 79, 105, 0.06);
    overflow: hidden;
}

.message {
    flex: none;
    width: 535px;
    font-size: 27.75px;
    line-height: 45.5px;
}

.message.user {
    align-self: flex-end;
    padding: 16px 20px 16px 24px;
    border-radius: 30px 30px 4px 30px;
    background-color: var(--accent);
    color: var(--base);
}

.message.bot {
    padding: 16px 24px;
    border: 2px solid var(--border);
    border-radius: 30px 30px 30px 4px;
    background-color: var(--base);
    color: var(--text);
}

.message code {
    padding: 3px 13px;
    background-color: var(--crust);
    font-family: inherit;
    font-size: 25.5px;
}

.prompt {
    display: flex;
    height: 171px;
    margin-top: 24px;
    padding: 15px 17px 15px 32px;
    border: 2px solid var(--border);
    border-radius: 24px;
    background-color: var(--mantle);
}

.placeholder {
    flex: 1;
    padding-top: 18px;
    font-size: 25.7px;
    line-height: 39px;
}

.prompt-actions {
    display: flex;
    flex-direction: column;
    justify-content: space-between;
    padding-left: 16px;
    border-left: 2px solid var(--border);
}

.prompt-actions button {
    width: 64px;
    height: 64px;
    border-radius: 14px;
}

.prompt-actions .icon {
    width: 28px;
    height: 28px;
}

.prompt-actions .reset {
    border-color: #b0b4c4;
    background-color: #cdd0db;
    box-shadow: 0 2px 4px rgba(76, 79, 105, 0.15);
}

.prompt-actions .send {
    border-color: #dcdfe5;
    color: #c2b1f7;
}

.status-bar {
    position: absolute;
    right: -2px;
    bottom: -2px;
    display: flex;
    align-items: center;
    gap: 25px;
    width: 745px;
    height: 56px;
    padding: 2px 0 0 16px;
    border: 2px solid var(--border);
    border-radius: 14px 0 0 0;
    background-color: var(--mantle);
    font-size: 23.8px;
}

.status-bar .chars {
    margin-left: -7px;
}

.status-bar .icon {
    width: 32px;
    height: 32px;
    margin-left: -1px;
    color: var(--red);
    stroke-width: 2.2;
}
```
